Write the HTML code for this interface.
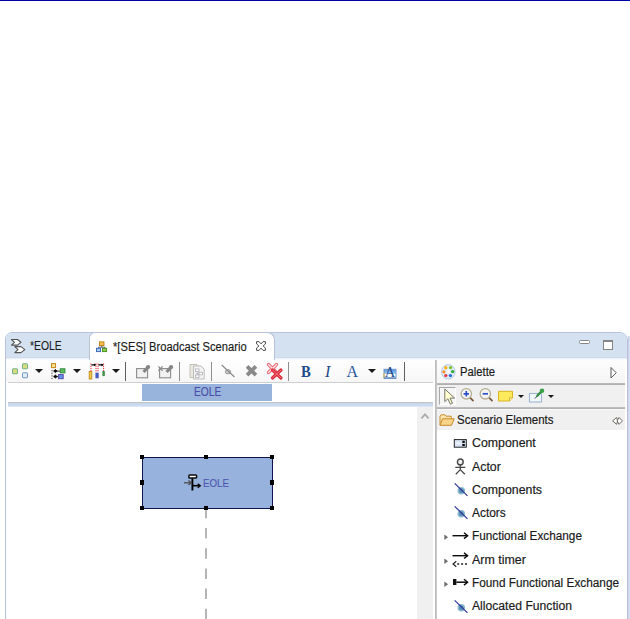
<!DOCTYPE html>
<html>
<head>
<meta charset="utf-8">
<title>Broadcast Scenario</title>
<style>
html,body{margin:0;padding:0;background:#fff;}
body{width:630px;height:619px;position:relative;overflow:hidden;font-family:"Liberation Sans","DejaVu Sans",sans-serif;font-size:12px;color:#000;}
.a{position:absolute;}
.t{position:absolute;white-space:nowrap;line-height:14px;font-size:12px;transform-origin:0 50%;color:#1a1a1a;-webkit-text-stroke-width:.18px;margin-top:.4px;}
svg{position:absolute;overflow:visible;}
.sep{position:absolute;width:1px;top:362px;height:19px;background:#8e8e8e;}
.dd{position:absolute;width:0;height:0;border-left:4px solid transparent;border-right:4px solid transparent;border-top:4px solid #1a1a1a;top:369px;}
.dds{position:absolute;width:0;height:0;border-left:3px solid transparent;border-right:3px solid transparent;border-top:3px solid #1a1a1a;top:395px;}
.h{position:absolute;width:4.4px;height:4.4px;background:#000;margin:.3px 0 0 .3px;}
.ex{position:absolute;width:0;height:0;border-top:2.5px solid transparent;border-bottom:2.5px solid transparent;border-left:4px solid #6c6c6c;left:444px;}
</style>
</head>
<body>
<!-- top rule -->
<div class="a" style="left:0;top:0;width:630px;height:1px;background:#0000a2;"></div>

<!-- window frame -->
<div class="a" id="frame" style="left:5px;top:332px;width:623px;height:300px;box-sizing:border-box;border:1px solid #b7c3da;border-radius:7px 8px 0 0;background:#fff;overflow:hidden;">
  <div class="a" style="left:0;top:0;width:621px;height:24px;background:#d3e1f1;"></div>
  <div class="a" style="left:0;top:24px;width:621px;height:3px;background:linear-gradient(#c0cde2,#e9eff8 45%,#fbfcfe);"></div>
</div>
<div class="a" style="left:628px;top:336px;width:2px;height:283px;background:linear-gradient(90deg,#c4cce8,#e2e5f5);"></div>

<!-- active tab -->
<div class="a" style="left:89px;top:332px;width:186px;height:29px;box-sizing:border-box;background:#fff;border:1px solid #b7c3da;border-bottom:none;border-radius:6px 8px 0 0;"></div>

<!-- tab 1 : *EOLE -->
<svg style="left:10px;top:338px" width="17" height="16" viewBox="0 0 17 16">
  <path d="M1.5 1.5h6l3.5 2.8-3.5 2.8h-6l3-2.8z" fill="#fff" stroke="#555" stroke-width="1.1" stroke-linejoin="round"/>
  <path d="M4.8 8.6h6.2l3.8 3-3.8 3H4.8l3.2-3z" fill="#fff" stroke="#555" stroke-width="1.1" stroke-linejoin="round"/>
</svg>
<div class="t" style="left:30px;top:339px;-webkit-text-stroke-width:.1px;transform:scaleX(.864);">*EOLE</div>

<!-- tab 2 : *[SES] Broadcast Scenario -->
<svg style="left:95.5px;top:341px" width="11.5" height="11.5" viewBox="0 0 13 13">
  <path d="M6.5 5v2M2.8 8.5V7h7.4v1.5" fill="none" stroke="#4a4a6a" stroke-width="1"/>
  <rect x="4" y="1" width="5" height="4.2" fill="#f7c04a" stroke="#b87a10" stroke-width="1"/>
  <rect x="0.6" y="8.2" width="4.6" height="3.8" fill="#a9c8f0" stroke="#2f62b0" stroke-width="1"/>
  <rect x="7.4" y="8.2" width="4.6" height="3.8" fill="#8fd04a" stroke="#3f8a1c" stroke-width="1"/>
</svg>
<div class="t" style="left:113px;top:339.4px;-webkit-text-stroke-width:.15px;transform:scaleX(.932);">*[SES] Broadcast Scenario</div>
<svg style="left:256px;top:341px" width="10" height="10" viewBox="0 0 10 10">
  <path d="M.6.600H3L5 2.900 7 .600H9.400V3L7.100 5 9.400 7V9.400H7L5 7.100 3 9.400H.6V7L2.900 5 .6 3Z" fill="#fff" stroke="#4e4e4e" stroke-width="1" stroke-linejoin="miter"/>
</svg>

<!-- min / max -->
<div class="a" style="left:579px;top:340px;width:11px;height:4px;box-sizing:border-box;border:1px solid #858585;border-radius:1.5px;background:#fff;"></div>
<div class="a" style="left:603px;top:340px;width:10px;height:10px;box-sizing:border-box;border:1px solid #858585;border-top-width:2px;background:#fff;"></div>

<!-- main toolbar -->
<div class="a" style="left:6px;top:360px;width:428px;height:22px;background:linear-gradient(#fff,#f6f6f6);"></div>
<div class="a" style="left:8px;top:382px;width:425px;height:1px;background:#cfcfcf;"></div>

<!-- icon 1: arrange -->
<svg style="left:11px;top:362px" width="19" height="18" viewBox="0 0 19 18">
  <rect x="1.5" y="6.8" width="5" height="5" rx=".5" fill="#d9dc7c" stroke="#6fb08a" stroke-width="1"/>
  <rect x="11.5" y="1.8" width="5" height="5" rx=".5" fill="#d9dc7c" stroke="#6fb08a" stroke-width="1"/>
  <rect x="11.5" y="10.8" width="5" height="5" rx=".5" fill="#e4eefa" stroke="#6f95cc" stroke-width="1"/>
</svg>
<div class="dd" style="left:35px;"></div>
<!-- icon 2: layout -->
<svg style="left:50px;top:362px" width="17" height="18" viewBox="0 0 17 18">
  <rect x="1.5" y="1.6" width="4" height="4" fill="#fbe3a0" stroke="#c8901c" stroke-width="1.1"/>
  <path d="M2 8v9" stroke="#444" stroke-width="1" stroke-dasharray="1.3 1.3"/>
  <path d="M3.6 9.1l1.8-1.5 1.8 1.5-1.8 1.5zM7 9.1h3" fill="#000" stroke="#000" stroke-width=".8"/>
  <path d="M3.6 14.6l1.8-1.5 1.8 1.5-1.8 1.5zM7 14.6h2" fill="#000" stroke="#000" stroke-width=".8"/>
  <rect x="10.3" y="6.8" width="4.6" height="4" fill="#5cc05c" stroke="#2f8a3a" stroke-width="1"/>
  <rect x="8.6" y="12.5" width="4.6" height="4.2" fill="#5c8fe0" stroke="#5a4fb0" stroke-width="1"/>
</svg>
<div class="dd" style="left:73px;"></div>
<!-- icon 3: sequence -->
<svg style="left:87px;top:362px" width="19" height="18" viewBox="0 0 19 18">
  <path d="M4 1.5v7.5M9 1.5v9M11 1.5v9M16.6 1.5v8" stroke="#ee2030" stroke-width="1" stroke-dasharray="1.2 1" fill="none"/>
  <path d="M4.5 2.8h4M11.5 2.8h4.6" stroke="#000" stroke-width="1.2"/>
  <path d="M7 1.4l2 1.4-2 1.4zM14.4 1.4l2 1.4-2 1.4z" fill="#000"/>
  <rect x="2.2" y="9.5" width="2.6" height="7.5" fill="#f3c84a" stroke="#c08a14" stroke-width=".9"/>
  <rect x="8.9" y="11.1" width="2.3" height="4.8" fill="#3b5fc8" stroke="#4a55b0" stroke-width=".8"/>
  <rect x="15.8" y="9.4" width="1.8" height="4.4" fill="#3f9a4a" stroke="#3f8a4a" stroke-width=".6"/>
</svg>
<div class="dd" style="left:112px;"></div>
<div class="sep" style="left:125px;background:#5e5e5e;"></div>
<!-- icon 4: pin (disabled) -->
<svg style="left:135px;top:363px" width="17" height="16" viewBox="0 0 17 16">
  <rect x="1.600" y="5.600" width="11" height="9.200" fill="#f1f1f1" stroke="#8a8a8a" stroke-width="1.100"/>
  <path d="M8.600 9 13 4.200" stroke="#868686" stroke-width="3.200"/>
  <circle cx="13.100" cy="4.100" r="2.100" fill="#868686"/>
</svg>
<!-- icon 5: unpin (disabled) -->
<svg style="left:157px;top:363px" width="18" height="16" viewBox="0 0 18 16">
  <rect x="2.600" y="5.600" width="11" height="9.200" fill="#f1f1f1" stroke="#8a8a8a" stroke-width="1.100"/>
  <path d="M1.400 3.400l4.200 4.400M5.600 3.400l-4.200 4.400" stroke="#8e8e8e" stroke-width="1.300"/>
  <path d="M9.600 9 14 4.200" stroke="#868686" stroke-width="3.200"/>
  <circle cx="14.100" cy="4.100" r="2.100" fill="#868686"/>
</svg>
<div class="sep" style="left:179px;"></div>
<!-- icon 6: copy layout (disabled) -->
<svg style="left:189px;top:363px" width="17" height="17" viewBox="0 0 17 17">
  <path d="M1 1.500h7l3 3v10H1z" fill="#ebe8df" stroke="#c6c2b6" stroke-width="1"/>
  <path d="M4.5 3h7.5l3.2 3.2V16H4.5z" fill="#f3f3f3" stroke="#bdbdbd" stroke-width="1"/>
  <rect x="6.5" y="6" width="3.5" height="2.5" fill="#fff" stroke="#b0b0b8" stroke-width=".8"/>
  <rect x="10" y="9.3" width="3.5" height="2.5" fill="#fff" stroke="#b0b0b8" stroke-width=".8"/>
  <rect x="6.5" y="12" width="3.5" height="2.5" fill="#fff" stroke="#b0b0b8" stroke-width=".8"/>
  <path d="M8 8.5v3.5M10 10.5H8" stroke="#b0b0b8" stroke-width=".8" fill="none"/>
</svg>
<div class="sep" style="left:211px;"></div>
<!-- icon 7: hide (disabled) -->
<svg style="left:220px;top:363px" width="16" height="16" viewBox="0 0 16 16">
  <ellipse cx="8" cy="8.800" rx="2.700" ry="2.100" fill="#cfcfcf" stroke="#969696" stroke-width="1"/>
  <path d="M1.7 2 14.5 14" stroke="#8a8a8a" stroke-width="1.2"/>
</svg>
<!-- icon 8: delete (disabled) -->
<svg style="left:245px;top:364px" width="13" height="13" viewBox="0 0 13 13">
  <path d="M2.100 2.300l8.800 8.800M10.900 2.300l-8.800 8.800" stroke="#8a8a8a" stroke-width="3.800" stroke-linecap="butt"/>
</svg>
<!-- icon 9: delete from model -->
<svg style="left:266px;top:362px" width="18" height="18" viewBox="0 0 18 18">
  <path d="M2.500 2.500l8 8M10.500 2.500l-8 8" stroke="#ea6a76" stroke-width="3.300" stroke-linecap="round"/>
  <path d="M2.500 2.500l8 8M10.500 2.500l-8 8" stroke="#fde4e6" stroke-width="1.300" stroke-linecap="round"/>
  <path d="M6.5 8l8.5 8M15 8l-8.5 8" stroke="#dc2838" stroke-width="3.2" stroke-linecap="round"/>
  <path d="M6.5 8l8.5 8M15 8l-8.5 8" stroke="#f07a84" stroke-width="1" stroke-linecap="round"/>
</svg>
<div class="sep" style="left:288px;"></div>
<!-- B I A -->
<div class="a" style="left:301px;top:362.8px;font:bold 16px/18px 'Liberation Serif','DejaVu Serif',serif;color:#1d4b8a;transform:scaleX(.92);transform-origin:0 0;">B</div>
<div class="a" style="left:325px;top:362.8px;font:italic 16px/18px 'Liberation Serif','DejaVu Serif',serif;color:#1d4b8a;">I</div>
<div class="a" style="left:346.5px;top:362.8px;font:16px/18px 'Liberation Serif','DejaVu Serif',serif;color:#24559a;">A</div>
<div class="dd" style="left:367.5px;"></div>
<svg style="left:383px;top:366px" width="14" height="14" viewBox="0 0 14 14">
  <defs><linearGradient id="ga" x1="0" y1="0" x2="0" y2="1"><stop offset="0" stop-color="#4f8fdc"/><stop offset=".5" stop-color="#a9ccf2"/><stop offset=".55" stop-color="#fff"/><stop offset="1" stop-color="#fff"/></linearGradient></defs>
  <rect x="1" y="3.3" width="12" height="9" fill="url(#ga)" stroke="#6f9ad4" stroke-width="1"/>
  <path d="M1 7v5" stroke="#d8b84a" stroke-width="1.2"/>
  <path d="M1 12h12" stroke="#5a7fb8" stroke-width="1.2"/>
  <text x="7" y="10.8" text-anchor="middle" font-family="Liberation Serif,serif" font-size="14.5" fill="#1f4a8c">A</text>
</svg>
<div class="sep" style="left:404px;background:#5e5e5e;"></div>

<!-- header strip -->
<div class="a" style="left:142px;top:384px;width:130px;height:17px;background:#98b3dc;"></div>
<div class="t" style="left:193.500px;top:384.800px;color:#4a4ea8;-webkit-text-stroke-width:.15px;transform:scaleX(.85);">EOLE</div>
<div class="a" style="left:8px;top:402px;width:425px;height:1px;background:#c4c4c4;"></div>
<div class="a" style="left:8px;top:403px;width:425px;height:4px;background:linear-gradient(#c6d6ec,#cddcf0 70%,#e6eef8);"></div>

<!-- scrollbar -->
<div class="a" style="left:417px;top:407px;width:16px;height:212px;background:#f0f0f0;"></div>
<svg style="left:420px;top:412px" width="10" height="8" viewBox="0 0 10 8"><path d="M1.4 6.3l3.600-3.900 3.600 3.900" fill="none" stroke="#adadad" stroke-width="1.900"/></svg>

<!-- lifeline -->
<svg style="left:200px;top:500px" width="12" height="119" viewBox="0 0 12 119">
  <path d="M6 7.8V119" stroke="#979797" stroke-width="1.400" stroke-dasharray="10.500 9.700" fill="none"/>
</svg>
<!-- node -->
<div class="a" style="left:141.5px;top:456.5px;width:131px;height:52px;box-sizing:border-box;background:#97b2dc;border:1.500px solid #12144e;border-top-width:1.800px;border-bottom-width:1.800px;"></div>
<svg style="left:183px;top:473px" width="20" height="19" viewBox="0 0 20 19">
  <rect x="5.900" y="1.900" width="7.700" height="3.200" rx=".8" fill="#fff" stroke="#0c0c0c" stroke-width="1.500"/>
  <path d="M9.400 5.300v12.200" stroke="#000" stroke-width="1.900"/>
  <path d="M1 9.800h7" stroke="#4c4c4c" stroke-width="1.300"/><path d="M5.400 7.600l2.900 2.200-2.900 2.200" fill="none" stroke="#4c4c4c" stroke-width="1.200"/>
  <path d="M10 12.700h6.800" stroke="#000" stroke-width="1.600"/><path d="M14.700 10.700l2.600 2-2.600 2" fill="none" stroke="#000" stroke-width="1.300"/>
</svg>
<div class="t" style="left:202.800px;top:475.800px;font-size:11px;color:#4e56ae;-webkit-text-stroke-width:.1px;transform:scaleX(.885);">EOLE</div>
<div class="h" style="left:139.5px;top:454.5px;"></div>
<div class="h" style="left:203.8px;top:454.5px;"></div>
<div class="h" style="left:269.5px;top:454.5px;"></div>
<div class="h" style="left:139.5px;top:480px;"></div>
<div class="h" style="left:269.5px;top:480px;"></div>
<div class="h" style="left:139.5px;top:505.3px;"></div>
<div class="h" style="left:203.8px;top:505.3px;"></div>
<div class="h" style="left:269.5px;top:505.3px;"></div>

<!-- sash -->
<div class="a" style="left:435px;top:360px;width:2px;height:259px;background:linear-gradient(90deg,#b6b6b6,#cfcfcf);"></div>

<!-- palette -->
<div class="a" style="left:437px;top:360px;width:188px;height:24px;background:linear-gradient(#fdfdfd,#f4f4f4);"></div>
<div class="a" style="left:437px;top:383px;width:188px;height:2px;background:linear-gradient(#c4c4c4,#adadad 50%,#b4b4b4);"></div>
<div class="a" style="left:437px;top:385px;width:188px;height:22.5px;background:#f0f0f0;"></div>
<div class="a" style="left:437px;top:407px;width:188px;height:2px;background:linear-gradient(#c8c8c8,#b0b0b0 50%,#b6b6b6);"></div>
<div class="a" style="left:437px;top:409px;width:188px;height:1.600px;background:#f9f9f9;"></div>
<div class="a" style="left:437px;top:410px;width:188px;height:20px;background:#f0f0f0;"></div>

<!-- palette icon -->
<svg style="left:441px;top:364px" width="15" height="16" viewBox="0 0 15 16">
  <ellipse cx="7.3" cy="7.8" rx="6.8" ry="7.2" fill="#e6eefa" stroke="#b5c8e6" stroke-width="1"/>
  <circle cx="4.8" cy="3.8" r="1.7" fill="#f7b21c"/>
  <circle cx="9.6" cy="3.6" r="1.7" fill="#7cc02c"/>
  <circle cx="2.9" cy="7.8" r="1.6" fill="#f78c1c"/>
  <circle cx="11.6" cy="7.6" r="1.7" fill="#2fa83a"/>
  <circle cx="4.8" cy="11.6" r="1.7" fill="#e0404c"/>
  <circle cx="9.4" cy="11.6" r="1.7" fill="#2c6ee0"/>
  <circle cx="7.3" cy="7.6" r="1.5" fill="#fff"/>
</svg>
<div class="t" style="left:459.7px;top:365px;transform:scaleX(.937);">Palette</div>
<svg style="left:609.5px;top:366px" width="8" height="14" viewBox="0 0 8 14"><path d="M1 1.5v10.5l5.2-5.25z" fill="#fff" stroke="#5a5a5a" stroke-width="1"/></svg>

<!-- palette tools -->
<div class="a" style="left:438.5px;top:386.5px;width:17.5px;height:18.5px;box-sizing:border-box;background:#f6f6f6;border-top:1px solid #a8a8a8;border-left:1px solid #a8a8a8;border-right:1px solid #fff;border-bottom:1px solid #fff;"></div>
<svg style="left:443px;top:388px" width="13" height="17" viewBox="0 0 13 17">
  <path d="M1.800 1v12.600l3.100-2.800 2.500 5.500 2.100-1-2.500-5.200h4.600z" fill="#ffffd2" stroke="#77776a" stroke-width="1" stroke-linejoin="round"/>
</svg>
<svg style="left:459px;top:387px" width="16" height="16" viewBox="0 0 16 16">
  <path d="M11 10.600 14 13.700" stroke="#7a5636" stroke-width="1.700" stroke-linecap="round"/>
  <circle cx="7.300" cy="6.800" r="5.200" fill="#f4f4f0" stroke="#b4ad94" stroke-width="1.300"/>
  <path d="M4.6 6.8h5.4M7.3 4.1v5.4" stroke="#2c50c8" stroke-width="1.7"/>
</svg>
<svg style="left:478px;top:387px" width="16" height="16" viewBox="0 0 16 16">
  <path d="M11 10.600 14 13.700" stroke="#7a5636" stroke-width="1.700" stroke-linecap="round"/>
  <circle cx="7.300" cy="6.800" r="5.200" fill="#f4f4f0" stroke="#b4ad94" stroke-width="1.300"/>
  <path d="M4.6 6.8h5.4" stroke="#2c50c8" stroke-width="1.7"/>
</svg>
<svg style="left:497px;top:390px" width="17" height="12" viewBox="0 0 17 12">
  <path d="M1.5 1.3h14v6.5l-3 3.2h-11z" fill="#ffe95c" stroke="#d9b520" stroke-width="1"/>
  <path d="M15.5 7.8h-3v3.2" fill="#fff6a8" stroke="#c8a418" stroke-width=".8"/>
</svg>
<div class="dds" style="left:517.5px;"></div>
<svg style="left:528px;top:388px" width="18" height="15" viewBox="0 0 18 15">
  <rect x="1.500" y="5.500" width="12" height="8.500" fill="#f2f7fd" stroke="#9db6d6" stroke-width="1.100"/>
  <path d="M7 10.5 9.8 7.3" stroke="#3a3a6a" stroke-width="1"/>
  <path d="M9.3 7.8 13.5 3.2" stroke="#2f8a3a" stroke-width="2.2" stroke-linecap="round"/>
  <circle cx="14" cy="2.8" r="2.3" fill="#3fa04a"/>
</svg>
<div class="dds" style="left:547.7px;"></div>

<!-- drawer -->
<svg style="left:439px;top:413px" width="16" height="14" viewBox="0 0 16 14">
  <path d="M1 12V3.2l1.2-1.4h3.6l1.2 1.4h5.2v2.5" fill="#fbe4b0" stroke="#c88a28" stroke-width="1" stroke-linejoin="round"/>
  <path d="M1 12.3 3.6 5.8h11.6l-2.7 6.5z" fill="#fad38a" stroke="#c88a28" stroke-width="1" stroke-linejoin="round"/>
</svg>
<div class="t" style="left:456.900px;top:412.700px;transform:scaleX(.958);">Scenario Elements</div>
<svg style="left:611.500px;top:416.900px" width="11" height="8" viewBox="0 0 11 8">
  <path d="M.6 3.900 4.600.500 5.600 3.900 4.600 7.300Z" fill="#fff" stroke="#55534a" stroke-width=".85" stroke-linejoin="round"/><path d="M10.400 3.900 7 .5 5.200 3.900 7 7.300Z" fill="#fff" stroke="#55534a" stroke-width=".85" stroke-linejoin="round"/>
</svg>

<!-- palette entries -->
<svg style="left:453px;top:438px" width="15" height="11" viewBox="0 0 15 11">
  <rect x="1.300" y="1.600" width="12" height="7.600" fill="#dbe7f6" stroke="#242428" stroke-width="1"/>
  <rect x="9.300" y="2.700" width="2.500" height="2.200" fill="#0a0a0a"/><rect x="9.300" y="5.900" width="2.500" height="2.200" fill="#0a0a0a"/><path d="M3.500 5.300h4" stroke="#fff" stroke-width=".8"/>
</svg>
<div class="t" style="left:472px;top:436px;transform:scaleX(1.028);">Component</div>

<svg style="left:454px;top:458px" width="13" height="17" viewBox="0 0 13 17">
  <circle cx="6.300" cy="3.900" r="2.900" fill="#efefef" stroke="#484848" stroke-width="1.400"/>
  <path d="M6.300 6.800v5M1.300 9.300h10M6.300 11.600 1.800 16.200M6.300 11.600l4.500 4.600" fill="none" stroke="#484848" stroke-width="1.300"/>
</svg>
<div class="t" style="left:472px;top:459.3px;transform:scaleX(1.028);">Actor</div>

<svg style="left:453px;top:482px" width="16" height="15" viewBox="0 0 16 15">
  <circle cx="8.300" cy="8.800" r="3.100" fill="#5990b2" stroke="#8dbad2" stroke-width="1.300"/>
  <path d="M1.700 1.300 14.500 13.800" stroke="#2a3098" stroke-width="1.150"/>
</svg>
<div class="t" style="left:472px;top:482.5px;transform:scaleX(1.029);">Components</div>

<svg style="left:453px;top:505.3px" width="16" height="15" viewBox="0 0 16 15">
  <circle cx="8.300" cy="8.800" r="3.100" fill="#5990b2" stroke="#8dbad2" stroke-width="1.300"/>
  <path d="M1.700 1.300 14.500 13.800" stroke="#2a3098" stroke-width="1.150"/>
</svg>
<div class="t" style="left:472px;top:505.8px;transform:scaleX(.994);">Actors</div>

<svg style="left:444px;top:534.200px" width="5" height="7" viewBox="0 0 5 7"><path d="M.3.600v5.400l3.800-2.700z" fill="#6e6e6e"/></svg>
<svg style="left:452px;top:530px" width="17" height="12" viewBox="0 0 17 12">
  <path d="M.5 5.700h14.800" stroke="#0c0c0c" stroke-width="1.400"/><path d="M12 2.800l3.600 2.900-3.600 2.900" fill="none" stroke="#0c0c0c" stroke-width="1.400"/>
</svg>
<div class="t" style="left:472px;top:528.7px;transform:scaleX(.981);">Functional Exchange</div>

<svg style="left:444px;top:557.600px" width="5" height="7" viewBox="0 0 5 7"><path d="M.3.600v5.400l3.800-2.700z" fill="#6e6e6e"/></svg>
<svg style="left:452px;top:552px" width="17" height="16" viewBox="0 0 17 16">
  <path d="M.5 3.700h14.800" stroke="#0c0c0c" stroke-width="1.400"/><path d="M12 .900l3.600 2.800-3.600 2.800" fill="none" stroke="#0c0c0c" stroke-width="1.400"/>
  <path d="M15 12H3.500" stroke="#222" stroke-width="1.400" stroke-dasharray="2 1.900"/><path d="M4.300 9.300l-3.200 2.700 3.200 2.700" fill="none" stroke="#222" stroke-width="1.200"/>
</svg>
<div class="t" style="left:472px;top:552.4px;transform:scaleX(1.035);">Arm timer</div>

<svg style="left:444px;top:580.700px" width="5" height="7" viewBox="0 0 5 7"><path d="M.3.600v5.400l3.800-2.700z" fill="#6e6e6e"/></svg>
<svg style="left:452px;top:576px" width="17" height="12" viewBox="0 0 17 12">
  <rect x="1" y="3" width="3.4" height="6" fill="#111"/>
  <path d="M4.400 6.200h10.800" stroke="#0c0c0c" stroke-width="1.500"/><path d="M12 3.300l3.600 2.900-3.600 2.900" fill="none" stroke="#0c0c0c" stroke-width="1.400"/>
</svg>
<div class="t" style="left:472px;top:575.2px;transform:scaleX(.984);">Found Functional Exchange</div>

<svg style="left:453px;top:598.5px" width="16" height="15" viewBox="0 0 16 15">
  <circle cx="8.300" cy="8.800" r="3.100" fill="#5990b2" stroke="#8dbad2" stroke-width="1.300"/>
  <path d="M1.700 1.300 14.500 13.800" stroke="#2a3098" stroke-width="1.150"/>
</svg>
<div class="t" style="left:472px;top:598.6px;transform:scaleX(1.013);">Allocated Function</div>

</body>
</html>
